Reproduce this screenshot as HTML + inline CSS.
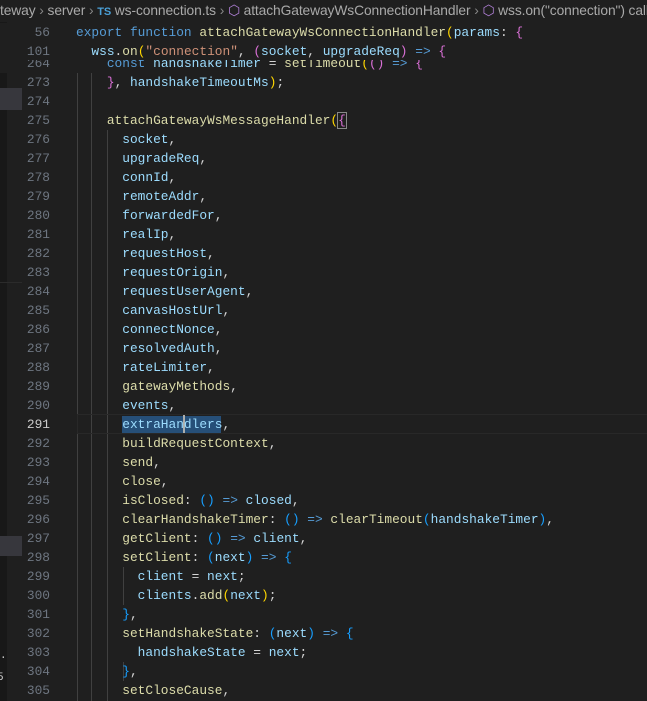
<!DOCTYPE html>
<html><head><meta charset="utf-8"><style>
body{margin:0;width:647px;height:701px;overflow:hidden;background:#1f1f1f;position:relative;font-family:"Liberation Mono",monospace;font-size:12.85px}
.bc{position:absolute;left:0;top:0;width:647px;height:22px;background:#1f1f1f;font-family:"Liberation Sans",sans-serif;font-size:13.8px;color:#a9a9a9;white-space:nowrap;overflow:hidden;line-height:22px;letter-spacing:-0.1px}
.r{position:absolute;left:0;width:647px;height:19px;line-height:19px;white-space:pre}
.n{position:absolute;right:597px;color:#6e7681;text-align:right}
.c{position:absolute;left:76px;color:#d4d4d4}
.k{color:#569cd6}.f{color:#dcdcaa}.v{color:#9cdcfe}.s{color:#ce9178}.y{color:#ffd700}.p{color:#da70d6}.b{color:#179fff}.w{color:#d4d4d4}
.g{position:absolute;width:1px;background:#404040}
.strip{position:absolute;left:0;top:22px;width:7px;height:679px;background:#181818}
</style></head><body>
<div class="strip"></div>
<div style="position:absolute;left:0;top:88px;width:22px;height:22px;background:#37373d"></div>
<div style="position:absolute;left:0;top:536px;width:22px;height:20px;background:#37373d"></div>
<div style="position:absolute;left:0;top:282px;width:22px;height:1px;background:#2b2b2b"></div>
<div style="position:absolute;left:0;top:650px;color:#ccc;font-size:11px">.</div>
<div style="position:absolute;left:-3px;top:672px;color:#ccc;font-size:11px">5</div>
<div class="g" style="left:77px;top:73px;height:628px"></div>
<div class="g" style="left:91px;top:73px;height:628px"></div>
<div class="g" style="left:107px;top:130px;height:571px"></div>
<div class="g" style="left:123px;top:567px;height:38px"></div>
<div class="g" style="left:123px;top:662px;height:19px"></div>
<div style="position:absolute;left:77px;top:414px;width:580px;height:18px;border:1px solid #282828;border-right:none"></div>
<div style="position:absolute;left:122px;top:416px;width:99px;height:17px;background:#264f78"></div>
<div style="position:absolute;left:183px;top:415px;width:2px;height:18px;background:#aeafad"></div>
<div id="code"></div>
<div class="r" style="top:54px;background:#1f1f1f"><span class="n">264</span><span class="c">    <span class="k">const</span> <span class="v">handshakeTimer</span> = <span class="f">setTimeout</span><span class="y">(</span><span class="p">()</span> <span class="k">=&gt;</span> <span class="p">{</span></span></div>
<div class="r" style="top:42px;height:18px;background:#1f1f1f;overflow:hidden"><span class="n">101</span><span class="c">  <span class="v">wss</span>.<span class="f">on</span><span class="y">(</span><span class="s">"connection"</span>, <span class="p">(</span><span class="v">socket</span>, <span class="v">upgradeReq</span><span class="p">)</span> <span class="k">=&gt;</span> <span class="p">{</span></span></div>
<div class="r" style="top:23px;background:#1f1f1f"><span class="n">56</span><span class="c"><span class="k">export</span> <span class="k">function</span> <span class="f">attachGatewayWsConnectionHandler</span><span class="y">(</span><span class="v">params</span>: <span class="p">{</span></span></div>
<div class="bc">teway <span style="color:#888">›</span> server <span style="color:#888">›</span> <span style="color:#4a9fd6;font-weight:bold;font-size:11px">TS</span> ws-connection.ts <span style="color:#888">›</span> <span style="color:#b180d7">⬡</span> attachGatewayWsConnectionHandler <span style="color:#888">›</span> <span style="color:#b180d7">⬡</span> wss.on("connection") callback</div>
<script>
var L=[
[273,'    <span class="p">}</span>, <span class="v">handshakeTimeoutMs</span><span class="y">)</span>;'],
[274,''],
[275,'    <span class="f">attachGatewayWsMessageHandler</span><span class="y">(</span><span class="p" style="outline:1px solid #888">{</span>'],
[276,'      <span class="v">socket</span>,'],[277,'      <span class="v">upgradeReq</span>,'],[278,'      <span class="v">connId</span>,'],[279,'      <span class="v">remoteAddr</span>,'],[280,'      <span class="v">forwardedFor</span>,'],[281,'      <span class="v">realIp</span>,'],[282,'      <span class="v">requestHost</span>,'],[283,'      <span class="v">requestOrigin</span>,'],[284,'      <span class="v">requestUserAgent</span>,'],[285,'      <span class="v">canvasHostUrl</span>,'],[286,'      <span class="v">connectNonce</span>,'],[287,'      <span class="v">resolvedAuth</span>,'],[288,'      <span class="v">rateLimiter</span>,'],[289,'      <span class="f">gatewayMethods</span>,'],[290,'      <span class="v">events</span>,'],[291,'      <span class="v">extraHandlers</span>,'],
[292,'      <span class="f">buildRequestContext</span>,'],[293,'      <span class="f">send</span>,'],[294,'      <span class="f">close</span>,'],
[295,'      <span class="f">isClosed</span>: <span class="b">()</span> <span class="k">=&gt;</span> <span class="v">closed</span>,'],
[296,'      <span class="f">clearHandshakeTimer</span>: <span class="b">()</span> <span class="k">=&gt;</span> <span class="f">clearTimeout</span><span class="b">(</span><span class="v">handshakeTimer</span><span class="b">)</span>,'],
[297,'      <span class="f">getClient</span>: <span class="b">()</span> <span class="k">=&gt;</span> <span class="v">client</span>,'],
[298,'      <span class="f">setClient</span>: <span class="b">(</span><span class="v">next</span><span class="b">)</span> <span class="k">=&gt;</span> <span class="b">{</span>'],
[299,'        <span class="v">client</span> = <span class="v">next</span>;'],
[300,'        <span class="v">clients</span>.<span class="f">add</span><span class="y">(</span><span class="v">next</span><span class="y">)</span>;'],
[301,'      <span class="b">}</span>,'],
[302,'      <span class="f">setHandshakeState</span>: <span class="b">(</span><span class="v">next</span><span class="b">)</span> <span class="k">=&gt;</span> <span class="b">{</span>'],
[303,'        <span class="v">handshakeState</span> = <span class="v">next</span>;'],
[304,'      <span class="b">}</span>,'],
[305,'      <span class="f">setCloseCause</span>,']];
var h='';L.forEach(function(l,i){h+='<div class="r" style="top:'+(73+i*19)+'px"><span class="n"'+(l[0]==291?' style="color:#ccc"':'')+'>'+l[0]+'</span><span class="c">'+l[1]+'</span></div>';});
document.getElementById('code').innerHTML=h;
</script>
</body></html>
